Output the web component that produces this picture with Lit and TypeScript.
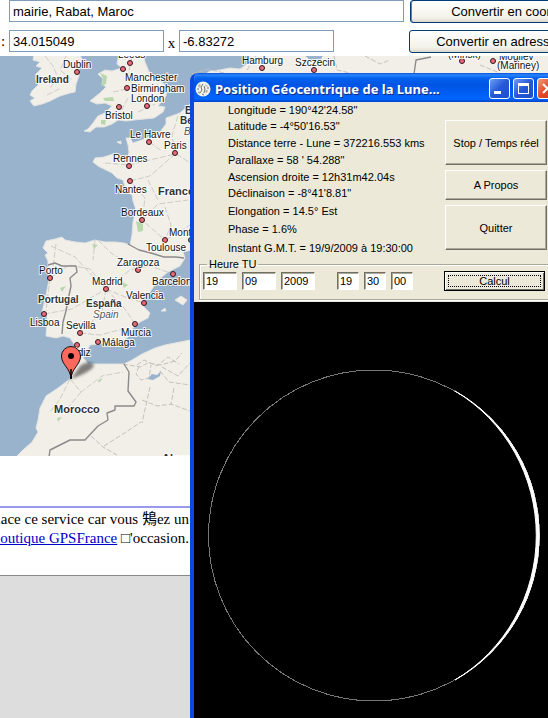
import { LitElement, html, svg, css } from "lit";
import { customElement } from "lit/decorators.js";

type Label = { t: string; x: number; y: number; kind?: string };

const CITIES: Array<[number, number]> = [
  [77, 72], [130, 63], [123, 69], [127, 88], [119, 107], [147, 106], [149, 142], [175, 153],
  [129, 166], [130, 181], [142, 220], [165, 240], [191, 240], [50, 278], [106, 289], [138, 270],
  [173, 274], [144, 303], [135, 324], [44, 314], [80, 333], [77, 345], [98, 342],
  [262, 68], [314, 70], [462, 61], [493, 61],
];

const LABELS: Label[] = [
  { t: "Leeds", x: 118, y: 58 },
  { t: "Dublin", x: 63, y: 68 },
  { t: "Ireland", x: 36, y: 83, kind: "country" },
  { t: "Manchester", x: 125, y: 81 },
  { t: "Birmingham", x: 131, y: 92 },
  { t: "London", x: 131, y: 102 },
  { t: "Bristol", x: 105, y: 119 },
  { t: "Le Havre", x: 130, y: 138 },
  { t: "Paris", x: 164, y: 149 },
  { t: "Rennes", x: 113, y: 162 },
  { t: "Nantes", x: 115, y: 193 },
  { t: "France", x: 158, y: 195, kind: "country large" },
  { t: "Bordeaux", x: 121, y: 216 },
  { t: "Montpellier", x: 169, y: 236 },
  { t: "Toulouse", x: 146, y: 251 },
  { t: "Zaragoza", x: 117, y: 266 },
  { t: "Barcelona", x: 152, y: 285 },
  { t: "Porto", x: 39, y: 274 },
  { t: "Madrid", x: 92, y: 285 },
  { t: "Valencia", x: 126, y: 299 },
  { t: "Portugal", x: 38, y: 303, kind: "country" },
  { t: "España", x: 86, y: 307, kind: "country" },
  { t: "Spain", x: 93, y: 318, kind: "alt" },
  { t: "Lisboa", x: 30, y: 326 },
  { t: "Sevilla", x: 66, y: 329 },
  { t: "Murcia", x: 121, y: 336 },
  { t: "Málaga", x: 102, y: 346 },
  { t: "Cádiz", x: 65, y: 356 },
  { t: "Morocco", x: 54, y: 413, kind: "country large" },
  { t: "Algeria", x: 162, y: 462, kind: "country large" },
  { t: "Belgium", x: 185, y: 114, kind: "country" },
  { t: "België", x: 180, y: 124, kind: "country" },
  { t: "Belgique", x: 184, y: 135, kind: "alt" },
  { t: "Hamburg", x: 242, y: 64 },
  { t: "Szczecin", x: 295, y: 66 },
  { t: "(Minsk)", x: 448, y: 58 },
  { t: "Mogilev", x: 499, y: 60 },
  { t: "(Mariney)", x: 497, y: 69 },
];

const READINGS = [
  `Longitude = 190°42'24.58"`,
  `Latitude = -4°50'16.53"`,
  `Distance terre - Lune = 372216.553 kms`,
  `Parallaxe = 58 ' 54.288"`,
  `Ascension droite = 12h31m42.04s`,
  `Déclinaison = -8°41'8.81"`,
  `Elongation = 14.5° Est`,
  `Phase = 1.6%`,
  `Instant G.M.T. = 19/9/2009 à 19:30:00`,
];

@customElement("europe-map")
export class EuropeMap extends LitElement {
  static styles = css`
    :host { display: block; height: 400px; overflow: hidden; }
    svg { display: block; width: 100%; height: 100%; }
    .sea { fill: #99b3cc; }
    .land { fill: #f2efe9; stroke: #e2e3e2; stroke-width: 1; }
    .green { fill: #b8d8ac; }
    .road { fill: none; stroke: #cfcbc7; stroke-width: 1; stroke-dasharray: 6 2; }
    .region { fill: none; stroke: #c4c1be; stroke-width: 1; stroke-dasharray: 5 2; }
    .border { fill: none; stroke: #8b8b8b; stroke-width: 1.4; stroke-linejoin: round; }
    .dot { fill: #ec6a78; stroke: #30191c; stroke-width: 1; }
    text { font: 10px "Liberation Sans", Arial, sans-serif; fill: #111; stroke: #fff; stroke-width: 2px; stroke-opacity: 0.85; paint-order: stroke; stroke-linejoin: round; }
    .country { font-weight: bold; fill: #333; }
    .large { font-size: 11px; }
    .alt { font-style: italic; fill: #555; }
  `;

  render() {
    return html`<svg viewBox="0 56 548 400" preserveAspectRatio="xMinYMin slice" role="img" aria-label="Carte">
      <defs>
        <filter id="soft"><feGaussianBlur stdDeviation="1.5" /></filter>
      </defs>
      <rect class="sea" y="56" width="548" height="400" />
      <path class="land" d="M34 54L33 60 40 62 36 66 42 68 36 74 36 80 39 84 32 91 30 95 35 98 30 101 34 106 42 104 50 101 60 96 70 93 75 92 76 84 79 76 79 68 82 60 80 54Z" />
      <path class="land" d="M119 54L117 64 122 68 112 71 105 70 98 74 103 79 102 84 106 87 100 93 90 101 97 104 105 103 112 106 105 113 98 116 93 123 88 129 84 131 90 132 96 127 104 127 112 124 118 120 126 121 134 120 144 119 154 118 163 112 165 107 158 106 161 102 166 96 167 88 162 82 155 80 150 74 145 62 143 54Z" />
      <path class="land" d="M560 54H250L247 64 240 69 230 68 220 70 210 71 203 76 190 104 180 113 166 118 166 124 160 132 150 136 142 140 133 143 130 138 126 138 128 145 129 152 128 157 120 156 113 154 104 157 95 158 93 162 98 166 106 170 112 173 117 178 123 180 126 190 132 195 133 201 136 210 133 222 132 235 130 245 124 243 115 242 105 242 95 240 85 243 75 242 65 240 62 237 55 239 46 241 43 248 48 253 45 255 48 261 48 270 49 280 47 290 45 300 42 312 47 315 47 322 46 336 56 338 63 336 70 338 74 344 77 350 82 352 88 349 90 345 100 344 110 342 120 343 128 337 133 328 140 322 148 318 150 313 144 307 142 302 150 292 158 280 168 272 180 266 185 258 183 252 200 248H560Z" />
      <path class="land" d="M82 356L80 362 74 370 70 379 58 388 46 396 40 408 38 420 36 428 38 432 32 442 24 449 15 458H560V340H190L180 342 165 345 155 348 142 354 132 360 124 364 115 364 100 364 88 364Z" />
      <path class="land" d="M175 300L181 296 187 300 183 305ZM161 311L165 308 166 311ZM117 142L121 141 121 144Z" />
      <path class="sea" d="M147 379L152 374 157 375 161 371 160 376 153 380ZM303 54H324L321 59 310 60Z" />
      <path class="green" d="M100 73L107 76 106 84 101 86 103 79ZM103 98L113 97 114 101 105 101ZM101 120L106 120 105 125 101 124ZM136 221L143 224 143 231 138 232ZM92 244L98 245 94 249ZM60 288L66 286 62 292ZM57 418L62 417 58 422ZM98 380L103 378 99 383ZM121 281L128 285 124 288Z" />
      <path class="road" d="M45 56L53 66 58 78 50 88M66 56L60 70 72 80M47 95L61 88M132 57L128 75 135 90 145 100M113 92L127 89M138 112L155 104M128 98L119 115M178 116L172 135 175 153 190 163M149 142L162 151M105 163L129 165 150 160 175 154M130 181L150 176 175 154M131 182L145 198 142 220 165 240M142 220L158 204 188 200M165 207L171 225 165 240M148 180L158 200M166 240L190 225M50 278L69 265 90 269 106 289M51 246L75 257 97 281M106 289L130 270 150 266 173 274M106 289L125 297 144 303M106 289L102 312 80 333M106 289L125 309 135 324M44 314L72 309 106 289M80 333L100 335 123 329M56 244L53 267M98 240L111 253 138 270M50 278L46 311M95 240L93 260M70 379L81 392 102 376 123 372M70 379L60 399 50 412M81 392L66 410" />
      <path class="region" d="M123 364L140 367 148 363 161 365 175 361 182 353M139 366L136 374 141 380 149 378 151 365M150 387L146 405 142 423M160 371L169 382 190 385M174 388L171 404 190 411M142 400L157 406 172 404M91 436L103 447 117 455M104 446L126 432 141 422M137 365L144 360 157 366 168 357 179 364M162 367L178 376 190 363M192 74L208 69 224 73M247 70L256 56M334 56L337 70 354 74M365 56L380 64 390 60M480 65L500 73" />
      <path class="border" d="M48 265L55 263 62 266 76 266 77 272 70 278 71 286 68 300 66 311 63 322 62 334M128 244L139 250 151 253 164 257 176 257 184 258M124 364L129 372 128 391 136 402 134 406 115 406 115 410 107 413 108 420 98 426 85 440 70 440 50 450 49 457M414 74L416 60 431 57" />
      ${CITIES.map(([x, y]) => svg`<circle class="dot" cx=${x} cy=${y} r="2.5" />`)}
      ${LABELS.map((l) => svg`<text class=${l.kind ?? "city"} x=${l.x} y=${l.y}>${l.t}</text>`)}
      <path d="M71 379L80 366Q90 359 94 365 93 371 71 379Z" fill="#333" opacity="0.6" filter="url(#soft)" />
      <path d="M71 379C70.500 368 61.500 365 61.500 356A9.500 9.500 0 0 1 80.500 356C80.500 365 71.500 368 71 379Z" fill="#fd6a5d" stroke="#111" />
      <path d="M71 369V379" stroke="#000" stroke-width="1.500" />
      <circle cx="71" cy="356" r="3" fill="#000" />
    </svg>`;
  }
}

@customElement("moon-window")
export class MoonWindow extends LitElement {
  static styles = css`
    :host { display: flex; flex-direction: column; box-sizing: border-box; border-left: 4px solid #0a48e0; border-radius: 8px 0 0 0; background: #ece9d8; overflow: hidden; font: 11px/18px "Liberation Sans", Arial, sans-serif; color: #000; }
    header { display: flex; align-items: center; gap: 4px; height: 29px; box-sizing: border-box; padding: 2px 7px 0 1px; background: linear-gradient(#0a50d8 0, #2a86fc 2px, #0262ee 5px, #0054e3 12px, #0060f8 22px, #0166ff 26px, #0040c8 29px); }
    h1 { flex: 1; margin: 0; font: bold 13px/20px "Noto Sans", sans-serif; color: #fff; text-shadow: 1px 1px #0f2d80; white-space: nowrap; }
    .logo { width: 16px; height: 16px; flex: none; }
    .tools { display: flex; gap: 3px; flex: none; }
    .tool { width: 21px; height: 21px; padding: 0; border: 1px solid #fff; border-radius: 3px; background: linear-gradient(135deg, #6f9cf4, #2458d8 50%, #1d50c8); }
    .tool svg { display: block; width: 19px; height: 19px; }
    .close { background: linear-gradient(135deg, #f09a7e, #e0482a 50%, #c83a18); }
    .info { display: flex; justify-content: space-between; padding: 0 18px 0 34px; }
    ul { margin: 0; padding: 0; list-style: none; white-space: nowrap; display: grid; grid-template-rows: 16px 17px 17px 17px 16px 18px 18px 19px 17px; }
    li { line-height: 17px; }
    .actions { display: grid; grid-template-rows: 45px 30px 45px; gap: 5px; width: 102px; padding-top: 18px; align-content: start; }
    .push { font: inherit; padding: 0; color: #000; background: #ece9d8; border: 1px solid; border-color: #fff #716f64 #716f64 #fff; box-shadow: inset -1px -1px #aca899; white-space: nowrap; }
    fieldset { margin: 0 -2px 2px 5px; padding: 0 21px 4px 3px; border: 1px solid #aca899; box-shadow: inset 1px 1px #fff, 0 1px #fff; display: flex; align-items: center; height: 43px; box-sizing: border-box; min-width: 0; }
    legend { padding: 0 2px; margin-left: 4px; line-height: 14px; }
    .fields { display: flex; flex: 1; gap: 5px; }
    .fields input { box-sizing: border-box; height: 18px; padding: 0 0 0 2px; border: 1px solid; border-color: #716f64 #fff #fff #716f64; box-shadow: inset 1px 1px #aca899; background: #fff; font: 11px "Liberation Sans", Arial, sans-serif; }
    .two { width: 34px; }
    .time { width: 22px; }
    .gap { margin-left: 17px; }
    .calc { width: 101px; height: 20px; border: 1px solid #000; box-shadow: inset 1px 1px #fff, inset -1px -1px #716f64; outline: 1px dotted #000; outline-offset: -5px; line-height: 14px; }
    .sky { flex: 1; min-height: 0; background: #000; }
    .sky svg { display: block; width: 100%; height: 416px; }
  `;

  render() {
    return html`
      <header>
        <svg class="logo" viewBox="0 0 16 16" aria-hidden="true">
          <circle cx="8" cy="8" r="7.500" fill="#f1f1ec" />
          <path d="M3 4l2-1 1 2-2 2zM10 3l3 2-2 1zM11 9l2 0-1 3-2-1zM3 10l2 1v2l-2-1z" fill="#b5b5ae" />
          <path d="M8 3l-2 3 1 3-2 3M9 5l1 3-1 4M2 8h2M12 7h2M7 13l2 1" stroke="#77776f" fill="none" />
        </svg>
        <h1>Position Géocentrique de la Lune...</h1>
        <div class="tools">
          <button class="tool" aria-label="Réduire"><svg viewBox="0 0 19 19"><path d="M4 12h7v3H4z" fill="#fff" /></svg></button>
          <button class="tool" aria-label="Agrandir"><svg viewBox="0 0 19 19"><path d="M4 4h11v11H4zM5 7v7h9V7z" fill="#fff" fill-rule="evenodd" /></svg></button>
          <button class="tool close" aria-label="Fermer"><svg viewBox="0 0 19 19"><path d="M5 5l9 9M14 5l-9 9" stroke="#fff" stroke-width="2" /></svg></button>
        </div>
      </header>
      <section class="info">
        <ul>${READINGS.map((r) => html`<li>${r}</li>`)}</ul>
        <div class="actions">
          <button class="push">Stop / Temps réel</button>
          <button class="push">A Propos</button>
          <button class="push">Quitter</button>
        </div>
      </section>
      <fieldset>
        <legend>Heure TU</legend>
        <div class="fields">
          <input class="two" aria-label="Jour" value="19" />
          <input class="two" aria-label="Mois" value="09" />
          <input class="two" aria-label="Année" value="2009" />
          <input class="time gap" aria-label="Heure" value="19" />
          <input class="time" aria-label="Minute" value="30" />
          <input class="time" aria-label="Seconde" value="00" />
        </div>
        <button class="push calc">Calcul</button>
      </fieldset>
      <div class="sky">
        <svg viewBox="194 302 354 416" preserveAspectRatio="xMinYMin meet" role="img" aria-label="Phase de la Lune">
          <circle cx="374" cy="535.500" r="165.500" fill="none" stroke="#777" stroke-width="1" shape-rendering="crispEdges" />
          <path d="M455 391A166 166 0 0 1 455 680A163 167 0 0 0 455 391Z" fill="#fff" stroke="#fff" stroke-width="1" />
        </svg>
      </div>
    `;
  }
}

@customElement("app-root")
export class AppRoot extends LitElement {
  static styles = css`
    :host { display: block; position: relative; min-height: 100vh; overflow: hidden; background: #ddd; font: 15px/19px "Liberation Serif", "Noto Sans CJK JP", serif; color: #000; }
    .page { background: #fff; border-bottom: 1px solid #888; }
    form { display: grid; gap: 8px; padding-bottom: 4px; }
    .row { display: flex; align-items: center; height: 22px; white-space: nowrap; }
    .row input { flex: none; box-sizing: border-box; height: 22px; padding: 0 3px; border: 1px solid #7f9db9; background: #fff; font: 13px "Liberation Sans", Arial, sans-serif; }
    .address { width: 395px; margin-left: 9px; }
    .colon { width: 9px; padding-left: 1px; box-sizing: border-box; }
    .lat, .lng { width: 155px; }
    .x { width: 15px; text-align: center; padding-top: 4px; }
    .convert { flex: none; height: 23px; padding: 0; border: 1px solid #003c74; border-radius: 3px; background: linear-gradient(#fff, #f3f2ea 80%, #dcd7cb); font: 13px "Liberation Sans", Arial, sans-serif; color: #000; }
    .to-coords { width: 232px; margin-left: 6px; box-shadow: inset 1px 0 #5a82b4; }
    .to-address { width: 175px; margin-left: 75px; }
    .note { margin-top: 50px; border-top: 2px solid #99e; padding: 2px 0 27px; }
    .note p { margin: 0; width: 189px; display: flex; justify-content: flex-end; white-space: pre; }
    a { color: #00c; }
    moon-window { position: absolute; left: 190px; right: -17px; top: 73px; bottom: 0; }
  `;

  render() {
    return html`
      <main class="page">
        <form>
          <div class="row">
            <input class="address" aria-label="Adresse" value="mairie, Rabat, Maroc" />
            <button type="button" class="convert to-coords">Convertir en coordonnées</button>
          </div>
          <div class="row">
            <label class="colon" for="lat">:</label>
            <input id="lat" class="lat" value="34.015049" />
            <label class="x" for="lng">x</label>
            <input id="lng" class="lng" value="-6.83272" />
            <button type="button" class="convert to-address">Convertir en adresse</button>
          </div>
        </form>
        <europe-map></europe-map>
        <section class="note">
          <p>place ce service car vous 鴩ez un</p>
          <p><a href="#">boutique GPSFrance</a> &#9633;'occasion.</p>
        </section>
      </main>
      <moon-window></moon-window>
    `;
  }
}
